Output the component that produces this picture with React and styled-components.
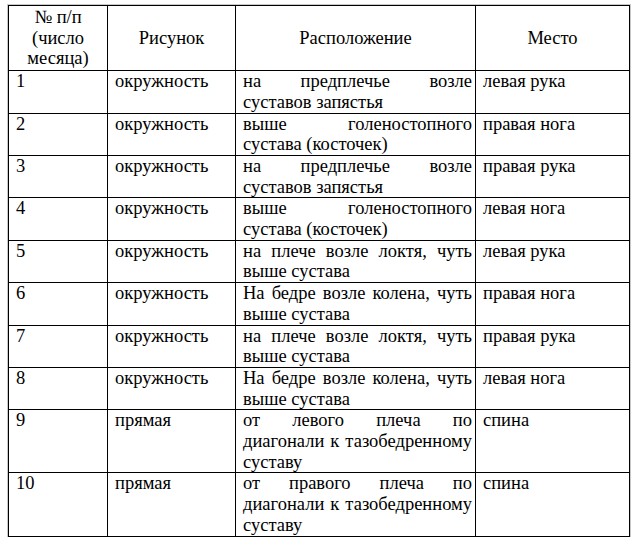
import React from "react";
import styled, { createGlobalStyle } from "styled-components";

const Global = createGlobalStyle`
  html, body { margin: 0; padding: 0; background: #ffffff; color: #000; }
  body { font-family: 'Times New Roman', 'Liberation Serif', serif; }
`;

const Page = styled.div`
  padding: 5px 0 0 8px;
  font-family: 'Times New Roman', 'Liberation Serif', serif;
`;

const Table = styled.table`
  border-collapse: collapse;
  table-layout: fixed;
  width: 621px;
  font-family: 'Times New Roman', 'Liberation Serif', serif;
  font-size: 18.5px;
  color: #000;
  box-shadow: 0 0 0 1px #c8c8c8;
`;

const HeadCell = styled.th`
  border: 1px solid #000;
  font-family: 'Times New Roman', 'Liberation Serif', serif;
  font-size: 18.5px;
  line-height: 20.7px;
  font-weight: normal;
  text-align: center;
  vertical-align: middle;
  padding: 1px 4px;
  height: 62px;
`;

const Cell = styled.td`
  border: 1px solid #000;
  font-family: 'Times New Roman', 'Liberation Serif', serif;
  font-size: 18.5px;
  line-height: 20.7px;
  vertical-align: top;
  padding: 0 3px 0 7px;
  text-align: left;
  height: ${(p) => (p.$tall ? 62 : 41)}px;
`;

const TextLine = styled.div`
  white-space: nowrap;
  text-align: ${(p) => (p.$last ? "left" : "justify")};
  text-align-last: ${(p) => (p.$last ? "left" : "justify")};
`;

const rows = [
  ["1", "окружность", ["на предплечье возле", "суставов запястья"], "левая рука"],
  ["2", "окружность", ["выше голеностопного", "сустава (косточек)"], "правая нога"],
  ["3", "окружность", ["на предплечье возле", "суставов запястья"], "правая рука"],
  ["4", "окружность", ["выше голеностопного", "сустава (косточек)"], "левая нога"],
  ["5", "окружность", ["на плече возле локтя, чуть", "выше сустава"], "левая рука"],
  ["6", "окружность", ["На бедре возле колена, чуть", "выше сустава"], "правая нога"],
  ["7", "окружность", ["на плече возле локтя, чуть", "выше сустава"], "правая рука"],
  ["8", "окружность", ["На бедре возле колена, чуть", "выше сустава"], "левая нога"],
  ["9", "прямая", ["от левого плеча по", "диагонали к тазобедренному", "суставу"], "спина"],
  ["10", "прямая", ["от правого плеча по", "диагонали к тазобедренному", "суставу"], "спина"],
];

export default function App() {
  return (
    <>
      <Global />
      <Page>
        <Table>
          <colgroup>
            <col style={{ width: 99 }} />
            <col style={{ width: 128 }} />
            <col style={{ width: 240 }} />
            <col style={{ width: 154 }} />
          </colgroup>
          <thead>
            <tr>
              <HeadCell>№ п/п<br />(число<br />месяца)</HeadCell>
              <HeadCell>Рисунок</HeadCell>
              <HeadCell>Расположение</HeadCell>
              <HeadCell>Место</HeadCell>
            </tr>
          </thead>
          <tbody>
            {rows.map(([n, fig, lines, place]) => {
              const tall = lines.length > 2;
              return (
                <tr key={n}>
                  <Cell $tall={tall}>{n}</Cell>
                  <Cell $tall={tall}>{fig}</Cell>
                  <Cell $tall={tall}>
                    {lines.map((l, i) => (
                      <TextLine key={i} $last={i === lines.length - 1}>{l}</TextLine>
                    ))}
                  </Cell>
                  <Cell $tall={tall}>{place}</Cell>
                </tr>
              );
            })}
          </tbody>
        </Table>
      </Page>
    </>
  );
}
